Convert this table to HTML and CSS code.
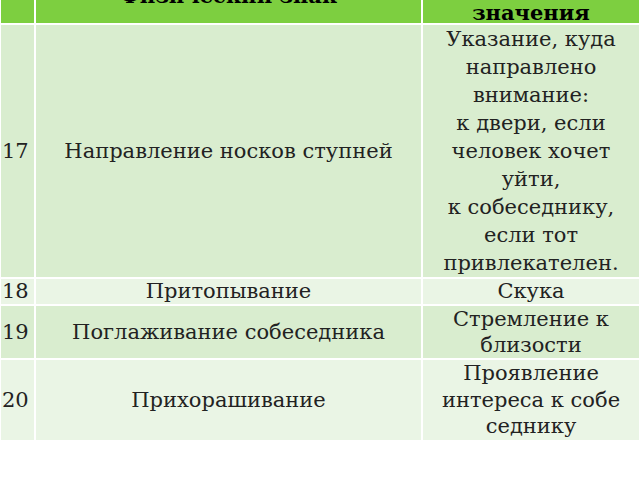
FILE: index.html
```html
<!DOCTYPE html>
<html lang="ru">
<head>
<meta charset="utf-8">
<link rel="stylesheet" href="styles.css">
</head>
<body>
<table class="signs">
  <colgroup>
    <col class="c-num">
    <col class="c-sign">
    <col class="c-mean">
  </colgroup>
  <thead>
    <tr class="head">
      <th></th>
      <th class="h-sign">Физический знак</th>
      <th><span class="h-first">Расшифровка</span><br>значения</th>
    </tr>
  </thead>
  <tbody>
    <tr class="odd r17">
      <td class="num">17</td>
      <td class="sign">Направление носков ступней</td>
      <td class="mean tall">Указание, куда<br>направлено<br>внимание:<br>к двери, если<br>человек хочет<br>уйти,<br>к собеседнику,<br>если тот<br>привлекателен.</td>
    </tr>
    <tr class="even r18">
      <td class="num">18</td>
      <td class="sign">Притопывание</td>
      <td class="mean">Скука</td>
    </tr>
    <tr class="odd r19">
      <td class="num">19</td>
      <td class="sign">Поглаживание собеседника</td>
      <td class="mean">Стремление к<br>близости</td>
    </tr>
    <tr class="even r20">
      <td class="num">20</td>
      <td class="sign">Прихорашивание</td>
      <td class="mean">Проявление<br>интереса к собе<br>седнику</td>
    </tr>
  </tbody>
</table>
</body>
</html>
```

FILE: styles.css
```css
html, body {
  margin: 0;
  padding: 0;
  background: #fff;
}

.signs {
  border-collapse: collapse;
  width: 640px;
  margin-top: -36px;
  margin-left: -1px;
  font-family: "DejaVu Serif", serif;
  font-size: 21px;
  color: #222;
  table-layout: fixed;
}

.c-num { width: 35px; }
.c-sign { width: 387px; }
.c-mean { width: 218px; }

.signs th,
.signs td {
  border: 2px solid #fff;
  padding: 0;
  text-align: center;
  vertical-align: middle;
  line-height: 26px;
}

.head th {
  background: #7dcf40;
  font-weight: bold;
  color: #000;
  height: 57px;
  line-height: 20px;
  vertical-align: bottom;
}

.head th.h-sign {
  height: 40px;
  padding-bottom: 17px;
}

.h-first {
  line-height: 30px;
}

.odd td { background: #d9edcf; }
.even td { background: #eaf5e5; }

.signs td.num {
  text-align: left;
  padding-left: 1px;
}

.mean.tall { line-height: 28px; }

.r17 td { height: 250px; }
.r18 td { height: 25px; line-height: 25px; }
.r19 td { height: 49px; line-height: 26px; }
.r20 td { height: 79px; line-height: 26.5px; }
```
